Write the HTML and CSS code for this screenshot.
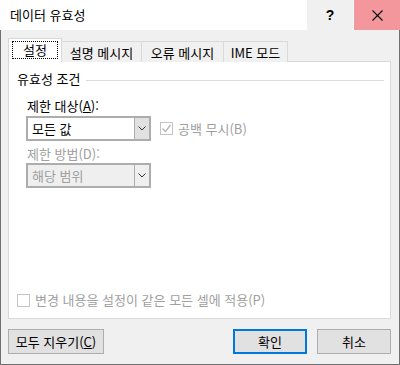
FILE: index.html
```html
<!DOCTYPE html>
<html lang="ko">
<head>
    <meta charset="UTF-8">
    <title>데이터 유효성</title>
    <link rel="stylesheet" href="styles.css">
</head>
<body>
    <div class="dialog">
        <div class="titlebar">
            <span class="title">데이터 유효성</span>
            <button class="title-btn help">?</button>
            <button class="title-btn close">
                <svg width="11" height="11" viewBox="0 0 11 11"><path d="M0.5 0.5 L10.5 10.5 M10.5 0.5 L0.5 10.5" stroke="#000" stroke-width="1.1" fill="none"/></svg>
            </button>
        </div>
        <div class="content">
            <div class="tabs">
                <div class="tab tab-active"><span class="focus">설정</span></div>
                <div class="tab tab-2">설명 메시지</div>
                <div class="tab tab-3">오류 메시지</div>
                <div class="tab tab-4">IME 모드</div>
            </div>
            <div class="panel">
                <div class="group-title">
                    <span>유효성 조건</span>
                    <div class="group-line"></div>
                </div>
                <div class="field">
                    <div class="label">제한 대상(<u>A</u>):</div>
                    <div class="field-row">
                        <div class="combo">
                            <span class="combo-value">모든 값</span>
                            <span class="combo-arrow">
                                <svg width="8" height="5" viewBox="0 0 8 5"><path d="M0.5 0.5 L4 4 L7.5 0.5" stroke="#333" fill="none"/></svg>
                            </span>
                        </div>
                        <label class="check disabled">
                            <span class="box">
                                <svg width="11" height="11" viewBox="0 0 11 11"><path d="M1.5 5.5 L4.5 8.5 L9.5 2" stroke="#b4b4b4" stroke-width="1.3" fill="none"/></svg>
                            </span>
                            공백 무시(B)
                        </label>
                    </div>
                </div>
                <div class="field">
                    <div class="label label-second disabled">제한 방법(D):</div>
                    <div class="combo combo-disabled">
                        <span class="combo-value">해당 범위</span>
                        <span class="combo-arrow">
                            <svg width="8" height="5" viewBox="0 0 8 5"><path d="M0.5 0.5 L4 4 L7.5 0.5" stroke="#333" fill="none"/></svg>
                        </span>
                    </div>
                </div>
                <label class="check disabled bottom-check">
                    <span class="box"></span>
                    변경 내용을 설정이 같은 모든 셀에 적용(P)
                </label>
            </div>
            <div class="actions">
                <button class="btn btn-wide">모두 지우기(<u>C</u>)</button>
                <div class="spacer"></div>
                <button class="btn btn-default">확인</button>
                <button class="btn">취소</button>
            </div>
        </div>
    </div>
</body>
</html>
```

FILE: styles.css
```css
* {
    box-sizing: border-box;
}
body {
    margin: 0;
    font-family: "Noto Sans CJK KR", "Liberation Sans", sans-serif;
    font-size: 13px;
    color: #000;
    background-color: #f0f0f0;
}
.dialog {
    width: 400px;
    height: 365px;
    display: flex;
    flex-direction: column;
    background-color: #f0f0f0;
    border: 1px solid #707070;
    border-top: none;
}
.titlebar {
    height: 30px;
    display: flex;
    align-items: stretch;
    background-color: #fff;
    margin: 0 -1px;
}
.title {
    flex: 1;
    padding-left: 10px;
    line-height: 30px;
}
.title-btn {
    width: 46px;
    border: none;
    padding: 0;
    font-family: inherit;
    display: flex;
    align-items: center;
    justify-content: center;
}
.help {
    background-color: #f0f0f0;
    font-size: 14px;
    font-weight: bold;
    font-family: "Liberation Sans", sans-serif;
    margin-right: 1px;
}
.close {
    background-color: #f4979c;
}
.content {
    flex: 1;
    padding: 9px 8px 0 7px;
    display: flex;
    flex-direction: column;
}
.tabs {
    display: flex;
    align-items: flex-end;
    height: 23px;
    position: relative;
    z-index: 1;
    margin-bottom: -1px;
}
.tab {
    height: 21px;
    border: 1px solid #d9d9d9;
    border-bottom: none;
    border-left: none;
    display: flex;
    align-items: center;
    justify-content: center;
    background-color: #f0f0f0;
}
.tab-active {
    height: 24px;
    width: 54px;
    background-color: #fff;
    border-left: 1px solid #d9d9d9;
    border-right: 1px solid #d9d9d9;
}
.focus {
    width: 46px;
    height: 18px;
    border: 1px dotted #000;
    display: flex;
    align-items: center;
    justify-content: center;
    margin-bottom: 2px;
}
.tab-2 {
    width: 80px;
}
.tab-3 {
    width: 82px;
}
.tab-4 {
    width: 64px;
}
.panel {
    height: 258px;
    width: 383px;
    background-color: #fff;
    border: 1px solid #d9d9d9;
    padding: 9px 6px 10px 8px;
    display: flex;
    flex-direction: column;
}
.group-title {
    display: flex;
    align-items: center;
    height: 16px;
    line-height: 16px;
}
.group-line {
    flex: 1;
    height: 1px;
    background-color: #dcdcdc;
    margin-left: 6px;
    margin-top: 3px;
}
.field {
    padding-left: 9px;
}
.label {
    margin-top: 11px;
    line-height: 16px;
    margin-left: 1px;
}
.label-second {
    margin-top: 5px;
}
.disabled {
    color: #a0a0a0;
}
.field-row {
    display: flex;
    align-items: center;
}
.combo {
    width: 125px;
    height: 25px;
    margin-top: 2px;
    border: 2px solid #adadad;
    background-color: #fff;
    display: flex;
}
.combo-value {
    flex: 1;
    padding-left: 4px;
    line-height: 21px;
}
.combo-arrow {
    width: 15px;
    background-color: #e1e1e1;
    border-left: 1px solid #adadad;
    display: flex;
    align-items: center;
    justify-content: center;
}
.combo-disabled {
    background-color: #efefef;
    color: #a0a0a0;
    margin-top: 1px;
}
.combo-disabled .combo-arrow {
    background-color: #efefef;
}
.check {
    display: flex;
    align-items: center;
    line-height: 16px;
}
.field-row .check {
    margin-left: 9px;
    margin-top: 2px;
}
.box {
    width: 13px;
    height: 13px;
    border: 1px solid #c4c4c4;
    background-color: #fff;
    margin-right: 5px;
    display: flex;
    align-items: center;
    justify-content: center;
}
.bottom-check {
    margin-top: auto;
    margin-left: 0;
}
.actions {
    display: flex;
    align-items: center;
    margin-top: 10px;
    gap: 10px;
}
.spacer {
    flex: 1;
}
.btn {
    height: 25px;
    width: 74px;
    border: 1px solid #adadad;
    background-color: #e1e1e1;
    font-family: inherit;
    font-size: 13px;
    padding: 0;
}
.btn-wide {
    width: 96px;
}
.btn-default {
    border: 2px solid #0078d7;
}
```
